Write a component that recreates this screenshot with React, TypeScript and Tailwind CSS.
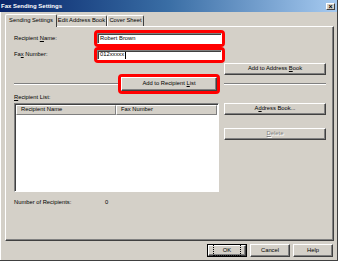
import React from 'react';

const FONT = { fontFamily: '"Liberation Sans", Arial, sans-serif' };

// classic raised 3D button
const Btn = ({ children, className = '', disabled = false }: { children: React.ReactNode; className?: string; disabled?: boolean }) => (
    <div
        className={
            'flex items-center justify-center bg-[#d4d0c8] border border-t-white border-l-white border-r-[#404040] border-b-[#404040] shadow-[inset_-1px_-1px_0_#808080] text-[5.8px] leading-none ' +
            (disabled ? 'text-[#808080] [text-shadow:1px_1px_0_#fff] ' : 'text-black ') +
            className
        }
    >
        <span>{children}</span>
    </div>
);

const U = ({ children }: { children: React.ReactNode }) => <span className="underline underline-offset-[1px]">{children}</span>;

// red highlight ring used in the manual screenshot
const Ring = ({ children, className = '' }: { children: React.ReactNode; className?: string }) => (
    <div className={'border-[3px] border-[#ff0000] rounded-[4px] ' + className}>{children}</div>
);

const TextBox = ({ value, caret = false }: { value: string; caret?: boolean }) => (
    <div className="h-full w-full bg-white border border-t-[#808080] border-l-[#808080] border-r-white border-b-white shadow-[inset_1px_1px_0_#404040] flex items-center pl-[2px] text-[5.8px] leading-none text-black">
        <span>{value}</span>
        {caret && <span className="inline-block w-px h-[7px] bg-black ml-px" />}
    </div>
);

export default function App() {
    return (
        <div className="w-[338px] h-[261px] bg-[#d4d0c8] overflow-hidden flex flex-col border-r border-r-[#404040] border-b border-b-[#404040] select-none" style={FONT}>
            {/* title bar */}
            <div className="h-[12px] shrink-0 flex items-center justify-between pl-[1px] pr-[2px] bg-gradient-to-r from-[#0a246a] via-[#3a6ea5] to-[#a6caf0]">
                <span className="text-white font-bold text-[6px] leading-none">Fax Sending Settings</span>
                <div className="w-[9px] h-[7px] bg-[#d4d0c8] border border-t-white border-l-white border-r-[#404040] border-b-[#404040] flex items-center justify-center text-[7px] leading-none font-bold text-black">
                    ×
                </div>
            </div>

            <div className="flex-1 flex flex-col pl-[4px] pr-[3px] border-l border-l-white">
                {/* tabs */}
                <div className="h-[13px] mt-[1px] flex items-end">
                    <div className="relative z-10 -mb-px w-[52px] h-[13px] bg-[#d4d0c8] border border-b-0 border-t-white border-l-white border-r-[#404040] rounded-t-[2px] flex items-center justify-center text-[5.8px] leading-none text-black">
                        Sending Settings
                    </div>
                    <div className="w-[50px] h-[11px] bg-[#d4d0c8] border border-b-0 border-t-white border-l-0 border-r-[#404040] rounded-t-[2px] flex items-center justify-center text-[5.8px] leading-none text-black">
                        Edit Address Book
                    </div>
                    <div className="w-[37px] h-[11px] bg-[#d4d0c8] border border-b-0 border-t-white border-l-white border-r-[#404040] rounded-t-[2px] flex items-center justify-center text-[5.8px] leading-none text-black">
                        Cover Sheet
                    </div>
                </div>

                {/* tab panel */}
                <div className="h-[215px] border border-t-white border-l-white border-r-[#404040] border-b-[#404040] shadow-[inset_-1px_-1px_0_#808080] flex flex-col pl-[8px] pr-[7px] text-[5.8px] leading-none text-black">
                    <div className="mt-[3px] flex items-center h-[17px]">
                        <span className="w-[80px]">
                            Recipient <U>N</U>ame:
                        </span>
                        <Ring className="w-[131px] h-[17px]">
                            <TextBox value="Robert Brown" />
                        </Ring>
                    </div>
                    <div className="flex items-center h-[16px]">
                        <span className="w-[80px]">
                            Fa<U>x</U> Number:
                        </span>
                        <Ring className="w-[131px] h-[16px]">
                            <TextBox value="012xxxxx" caret />
                        </Ring>
                    </div>
                    <div className="flex justify-end">
                        <Btn className="w-[102px] h-[12px]">
                            Add to Address <U>B</U>ook
                        </Btn>
                    </div>

                    <div className="-mt-px h-[20px] flex items-center">
                        <div className="w-[104px] h-[2px] border-t border-t-[#808080] border-b border-b-white" />
                        <Ring className="w-[102px] h-[20px]">
                            <Btn className="w-full h-full">
                                Add to Recipient <U>L</U>ist
                            </Btn>
                        </Ring>
                        <div className="flex-1 ml-[4px] h-[2px] border-t border-t-[#808080] border-b border-b-white" />
                    </div>

                    <div className="h-[8px] flex items-center">
                        <span>
                            <U>R</U>ecipient List:
                        </span>
                    </div>

                    <div className="mt-px flex items-start">
                        <div className="w-[205px] h-[89px] bg-white border border-t-[#808080] border-l-[#808080] border-r-white border-b-white shadow-[inset_1px_1px_0_#404040] flex flex-col p-[1px]">
                            <div className="h-[10px] flex shrink-0">
                                <div className="w-[100px] h-full bg-[#d4d0c8] border border-t-white border-l-white border-r-[#808080] border-b-[#808080] flex items-center pl-[4px]">
                                    Recipient Name
                                </div>
                                <div className="flex-1 h-full bg-[#d4d0c8] border border-t-white border-l-white border-r-[#808080] border-b-[#808080] flex items-center pl-[4px]">
                                    Fax Number
                                </div>
                            </div>
                        </div>
                        <div className="ml-[5px] flex flex-col">
                            <Btn className="w-[102px] h-[12px]">
                                A<U>d</U>dress Book...
                            </Btn>
                            <Btn className="mt-[13px] w-[102px] h-[12px]" disabled>
                                <U>D</U>elete
                            </Btn>
                        </div>
                    </div>

                    <div className="mt-[7px] h-[8px] flex items-center">
                        <span className="w-[91px]">Number of Recipients:</span>
                        <span>0</span>
                    </div>
                </div>

                {/* dialog buttons */}
                <div className="mt-[3px] flex justify-end gap-[3px] pr-px">
                    <div className="w-[40px] h-[13px] border border-black">
                        <Btn className="w-full h-full">
                            <span className="px-[9px] py-[2px] outline outline-1 outline-dotted outline-black">OK</span>
                        </Btn>
                    </div>
                    <Btn className="w-[40px] h-[13px]">Cancel</Btn>
                    <Btn className="w-[40px] h-[13px]">Help</Btn>
                </div>
            </div>
        </div>
    );
}
